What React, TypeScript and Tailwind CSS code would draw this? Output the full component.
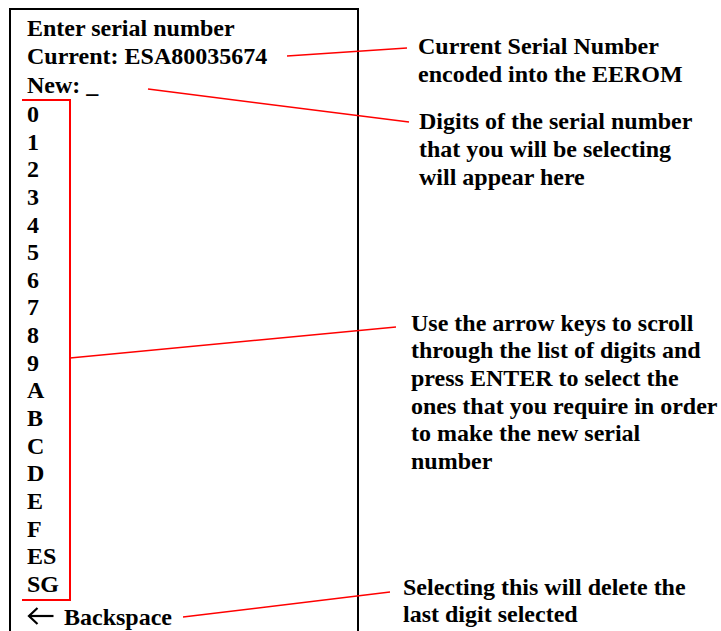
import React from 'react';

const digits = ['0', '1', '2', '3', '4', '5', '6', '7', '8', '9', 'A', 'B', 'C', 'D', 'E', 'F', 'ES', 'SG'];

const notes = [
  {
    lines: ['Current Serial Number', 'encoded into the EEROM'],
    className: 'mt-[33px] ml-[59px]',
  },
  {
    lines: ['Digits of the serial number', 'that you will be selecting', 'will appear here'],
    className: 'mt-[20px] ml-[60px]',
  },
  {
    lines: [
      'Use the arrow keys to scroll',
      'through the list of digits and',
      'press ENTER to select the',
      'ones that you require in order',
      'to make the new serial',
      'number',
    ],
    className: 'mt-[118px] ml-[52px]',
  },
  {
    lines: ['Selecting this will delete the', 'last digit selected'],
    className: 'mt-[98px] ml-[44px]',
  },
];

// red leader lines from the annotations to the screen items
const leaders = [
  [287, 56, 407, 48],
  [148, 89, 409, 122],
  [70, 358, 396, 327],
  [183, 617, 390, 592],
];

export default function App() {
  return (
    <div className="relative w-[721px] h-[631px] overflow-hidden bg-white text-black font-bold font-['Liberation_Serif','Times_New_Roman',serif] text-[24px]">
      <div className="flex items-start">
        {/* Screen */}
        <div className="ml-[9px] mt-[8px] w-[350px] h-[623px] shrink-0 border-t-2 border-l-2 border-r-2 border-black">
          <div className="pl-[16px] pt-[4px] leading-[28.3px] whitespace-nowrap">
            <div>Enter serial number</div>
            <div>Current: ESA80035674</div>
            <div>New: _</div>
          </div>
          <div className="ml-[11px] w-[49px] pl-[5px] border-t-2 border-r-2 border-b-2 border-[#ff0000] leading-[27.65px]">
            {digits.map((d) => (
              <div key={d}>{d}</div>
            ))}
          </div>
          <div className="mt-[2px] ml-[16px] flex items-center h-[27.7px] gap-[10px]">
            <svg width="27" height="18" viewBox="0 0 27 18" className="mb-[2px]" fill="none" stroke="#000" strokeWidth="2.2">
              <path d="M26.5 9H2" />
              <path d="M10.5 1 L2 9 L10.5 17" />
            </svg>
            <span>Backspace</span>
          </div>
        </div>

        {/* Annotations */}
        <div className="flex flex-col leading-[27.7px] whitespace-nowrap">
          {notes.map((n, i) => (
            <div key={i} className={n.className}>
              {n.lines.map((l) => (
                <div key={l}>{l}</div>
              ))}
            </div>
          ))}
        </div>
      </div>

      <svg className="absolute inset-0 pointer-events-none" width="721" height="631" viewBox="0 0 721 631">
        {leaders.map(([x1, y1, x2, y2], i) => (
          <line key={i} x1={x1} y1={y1} x2={x2} y2={y2} stroke="#ff0000" strokeWidth="1.5" />
        ))}
      </svg>
    </div>
  );
}
